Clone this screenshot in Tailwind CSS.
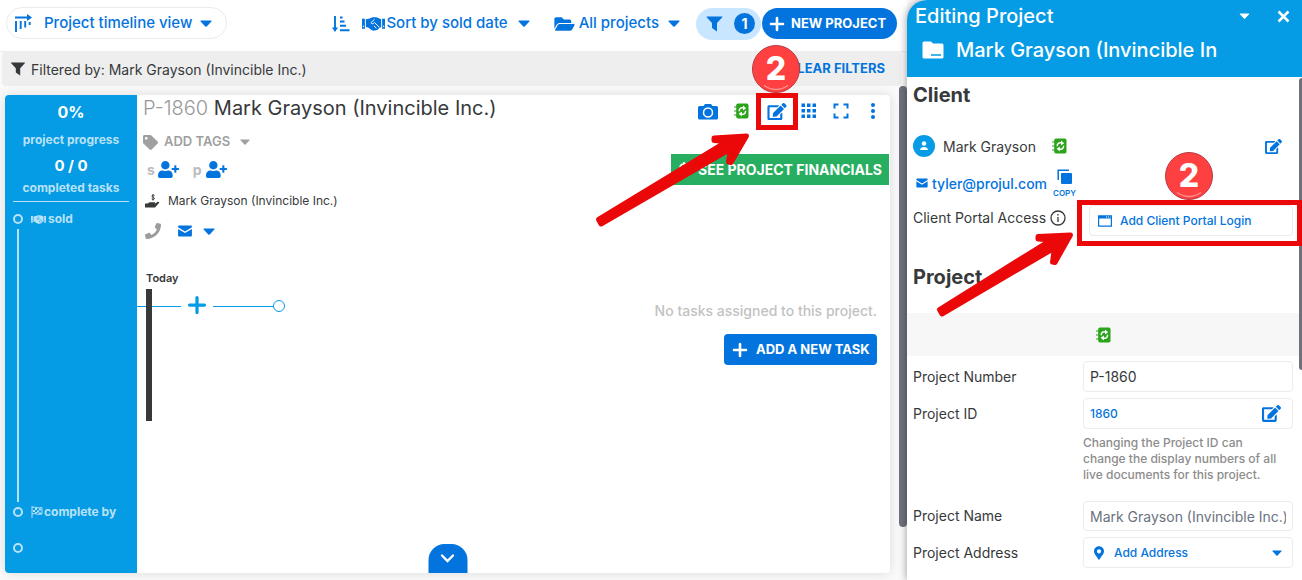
<!DOCTYPE html>
<html lang="en">
<head>
    <meta charset="UTF-8">
    <meta name="viewport" content="width=device-width, initial-scale=1.0">
    <script src="https://cdn.jsdelivr.net/npm/@tailwindcss/browser@4"></script>
    <title>Projects</title>
</head>
<body class="relative flex h-screen overflow-hidden bg-[#fafafa] font-['Inter','Liberation_Sans',sans-serif] text-[15px] text-[#37393b]">

    <!--Icons-->
    <svg class="hidden">
        <symbol id="caret" viewBox="0 0 12 7"><path d="M1 .5h10c.6 0 .8.7.4 1L6.7 6.4a1 1 0 0 1-1.400 0L.6 1.500C.2 1.200.4.5 1 .5z"/></symbol>
        <symbol id="plus" viewBox="0 0 16 16"><path d="M8 2v12M2 8h12" fill="none" stroke="currentColor" stroke-width="2.6" stroke-linecap="round"/></symbol>
        <symbol id="filter" viewBox="0 0 16 16"><path d="M.5.5h15c.4 0 .5.5.3.8L10.500 7v8.500L5.500 12V7L.2 1.300C0 1 .1.5.5.5z"/></symbol>
        <symbol id="edit" viewBox="0 0 576 512"><path d="M402.600 83.200l90.200 90.200c3.800 3.800 3.800 10 0 13.800L274.400 405.600l-92.800 10.300c-12.400 1.400-22.900-9.100-21.500-21.500l10.300-92.800L388.800 83.200c3.800-3.800 10-3.800 13.800 0zm162-22.900l-48.800-48.800c-15.200-15.200-39.900-15.200-55.200 0l-35.400 35.400c-3.800 3.800-3.800 10 0 13.800l90.200 90.200c3.800 3.800 10 3.800 13.800 0l35.400-35.400c15.200-15.300 15.200-40 0-55.200zM384 346.200V448H64V128h229.800c3.200 0 6.200-1.300 8.500-3.500l40-40c7.600-7.600 2.200-20.500-8.500-20.500H48C21.500 64 0 85.500 0 112v352c0 26.500 21.500 48 48 48h352c26.500 0 48-21.500 48-48V306.200c0-10.700-12.900-16-20.500-8.500l-40 40c-2.200 2.300-3.500 5.300-3.500 8.500z"/></symbol>
        <symbol id="user-plus" viewBox="0 0 640 512"><path d="M624 208h-64v-64c0-8.800-7.200-16-16-16h-32c-8.800 0-16 7.200-16 16v64h-64c-8.800 0-16 7.200-16 16v32c0 8.800 7.200 16 16 16h64v64c0 8.800 7.200 16 16 16h32c8.800 0 16-7.200 16-16v-64h64c8.800 0 16-7.200 16-16v-32c0-8.800-7.200-16-16-16zm-400 48c70.700 0 128-57.300 128-128S294.700 0 224 0 96 57.300 96 128s57.300 128 128 128zm89.600 32h-16.700c-22.200 10.200-46.900 16-72.900 16s-50.600-5.800-72.900-16h-16.700C60.200 288 0 348.200 0 422.400V464c0 26.500 21.500 48 48 48h352c26.500 0 48-21.500 48-48v-41.600c0-74.200-60.200-134.400-134.400-134.400z"/></symbol>
        <symbol id="handshake" viewBox="0 0 24 14"><path d="M0 1.500h3v10.500H0zM21 1.500h3v10.500h-3zM4 2l4-.8L11 0h4l5 2v8.500l-2 .5-1.500 2-2 .5L12 14l-2.500-1L6 10.500H4z"/><path d="M9.500 5.500c0 1.800 2.500 1.500 3.500 0l5 4.800M9.500 5.500L13 2.200M12.500 9l2.500 2.400" fill="none" stroke="var(--gap)" stroke-width="1"/><path d="M.8 9.500h1.200M22 9.500h1.200" stroke="var(--gap)" stroke-width="1.200"/></symbol>
        <symbol id="sync-book" viewBox="0 0 15 16"><rect x="2.200" y=".5" width="12.300" height="15" rx="1.800"/><path d="M0 4h3M0 8h3M0 12h3" stroke="currentColor" stroke-width="1.200"/><path d="M5.200 8.200C5 5.300 7.500 4.200 10 5M11.600 7.800c.2 2.900-2.300 4-4.800 3.200" fill="none" stroke="#fff" stroke-width="1.500"/><path d="M9 2.500L12.200 5.200 9 7.500zM7.800 8.500L4.600 10.800l3.200 2.700z" fill="#fff"/></symbol>
        <symbol id="mail" viewBox="0 0 16 13"><path d="M1.500.5h13a1 1 0 0 1 1 1v1L8 7 .5 2.500v-1a1 1 0 0 1 1-1zM.5 4.200L8 8.700l7.500-4.500v7.300a1 1 0 0 1-1 1h-13a1 1 0 0 1-1-1z"/></symbol>
    </svg>

    <!--Project list-->
    <main class="flex min-w-0 flex-1 flex-col">
        <header class="flex h-[52px] shrink-0 items-start border-b border-[#eeeeee] bg-white pl-[6px] pr-[10px] pt-[7px] font-medium text-[#0374dd]">
            <button class="flex h-8 w-[221px] items-center rounded-full border border-[#ebebeb] pl-2">
                <svg class="h-[18px] w-[18px]" viewBox="0 0 18 18"><path d="M0 3.500h15M1 7v11M5.700 7v8M10.200 7v6.500M14.700 8v3" fill="none" stroke="currentColor" stroke-width="1.900"/><path d="M12 0l5 3.500-5 3.500z" fill="currentColor"/></svg>
                <span class="ml-[11px]">Project timeline view</span>
                <svg class="ml-auto mr-[14px] h-[7px] w-3 fill-current"><use href="#caret"/></svg>
            </button>
            <div class="ml-auto flex h-[33px] items-center">
                <button aria-label="Sort order">
                    <svg class="h-4 w-[18px]" viewBox="0 0 18 16"><path d="M3 0v13M8 1.500h2.500M8 5.500h4.500M8 9.800h6M8 14.200h9.500" fill="none" stroke="currentColor" stroke-width="1.900"/><path d="M0 11.500h6L3 16z" fill="currentColor"/></svg>
                </button>
                <button class="ml-3 flex items-center">
                    <svg class="h-[14px] w-[23px] fill-current [--gap:#fff]"><use href="#handshake"/></svg>
                    <span class="ml-px">Sort by sold date</span>
                    <svg class="ml-[10px] h-[7px] w-3 fill-current"><use href="#caret"/></svg>
                </button>
                <button class="ml-6 flex items-center">
                    <svg class="h-[18px] w-[21px] fill-current" viewBox="0 0 576 512"><path d="M572.700 292.100L500.300 416.200A64 64 0 0 1 445 448H45c-18.500 0-30-20-20.700-36l72.400-124.200A64 64 0 0 1 152 256h400c18.500 0 30 20 20.700 36.100zM152 224h328v-48c0-26.500-21.500-48-48-48H272l-64-64H48C21.500 64 0 85.500 0 112v278l69-118.400C86.200 242.200 118 224 152 224z"/></svg>
                    <span class="ml-1">All projects</span>
                    <svg class="ml-[9px] h-[7px] w-3 fill-current"><use href="#caret"/></svg>
                </button>
                <button class="ml-4 flex h-8 w-[65px] items-center rounded-full bg-[#c8e6ff] pl-[10px]">
                    <svg class="h-4 w-[17px] fill-current"><use href="#filter"/></svg>
                    <span class="ml-[11px] flex h-[21px] w-[21px] items-center justify-center rounded-full bg-[#0374dd] text-[14px] font-bold text-white">1</span>
                </button>
                <button class="ml-px flex h-[31px] w-[135px] items-center rounded-full bg-[#0374dd] pl-[7px] text-white">
                    <svg class="h-4 w-4"><use href="#plus"/></svg>
                    <span class="ml-[6px] text-[13px] font-bold whitespace-nowrap">NEW PROJECT</span>
                </button>
            </div>
        </header>

        <!--Filter bar-->
        <div class="ml-[2px] mr-[6px] flex h-[34px] shrink-0 items-center rounded-[4px] bg-[#eeeeee] pl-[9px] pr-4">
            <svg class="h-[14px] w-[14px] fill-current"><use href="#filter"/></svg>
            <span class="ml-[6px] text-[14px]">Filtered by: Mark Grayson (Invincible Inc.)</span>
            <button class="ml-auto text-[13px] font-bold text-[#0374dd]">CLEAR FILTERS</button>
        </div>

        <div class="flex min-h-0 flex-1">
            <!--Project card-->
            <section class="relative mb-[7px] ml-[5px] mr-[9px] mt-[9px] flex min-w-0 flex-1 overflow-hidden rounded-[4px] bg-white shadow-[0_0_12px_rgba(0,0,0,0.13)]">
                <div class="flex w-[132px] shrink-0 flex-col bg-[#059be5] px-2 text-center font-bold text-[#b9e2f8]">
                    <p class="mt-[7px] text-[16px] leading-5 text-white">0%</p>
                    <p class="mt-2 text-[12px] leading-5">project progress</p>
                    <p class="mt-1 text-[15px] leading-6 text-white">0 / 0</p>
                    <p class="text-[12px] leading-5">completed tasks</p>
                    <div class="mt-[3px] border-t border-[#b9e2f8]"></div>
                    <div class="mt-[7px] flex h-5 items-center text-[12px]">
                        <span class="h-[10px] w-[10px] rounded-full border-2 border-[#b9e2f8]"></span>
                        <svg class="ml-2 h-[9px] w-[15px] fill-current [--gap:#059be5]"><use href="#handshake"/></svg>
                        <span class="ml-[2px]">sold</span>
                    </div>
                    <div class="ml-1 w-[2px] flex-1 bg-[#b9e2f8]"></div>
                    <div class="flex h-5 items-center text-[12px]">
                        <span class="h-[10px] w-[10px] rounded-full border-2 border-[#b9e2f8]"></span>
                        <svg class="ml-2 h-3 w-3" viewBox="0 0 12 12"><path d="M1 0v12M1 1.500c3-1.500 6 1.500 10 0v6.500c-4 1.500-7-1.500-10 0" fill="none" stroke="currentColor"/><path d="M2 4h2v2H2zM4 2h2v2H4zM6 4.500h2v2H6zM8 2.500h2v2H8zM4 6h2v1.500H4zM8 6.500h2V8H8z" fill="currentColor"/></svg>
                        <span class="ml-px whitespace-nowrap">complete by</span>
                    </div>
                    <span class="mb-5 mt-[21px] h-[10px] w-[10px] rounded-full border-2 border-[#b9e2f8]"></span>
                </div>

                <div class="flex min-w-0 flex-1 flex-col">
                    <div class="flex justify-between">
                        <div class="pl-[6px]">
                            <h1 class="text-[20px] leading-[26px]"><span class="font-light text-[#999999]">P-1860</span> Mark Grayson (Invincible Inc.)</h1>
                            <button class="mt-[11px] flex h-5 items-center text-[13px] font-semibold text-[#a0a0a0]">
                                <svg class="h-[15px] w-[15px] fill-current" viewBox="0 0 512 512"><path d="M0 252V48C0 21.500 21.500 0 48 0h204a48 48 0 0 1 34 14l212 212c18.700 18.700 18.700 49 0 67.900L293.800 498c-18.700 18.700-49 18.700-67.900 0L14 286A48 48 0 0 1 0 252zM112 64c-26.500 0-48 21.500-48 48s21.500 48 48 48 48-21.500 48-48-21.500-48-48-48z"/></svg>
                                <span class="ml-[6px]">ADD TAGS</span>
                                <svg class="ml-[10px] h-[6px] w-[10px] fill-current"><use href="#caret"/></svg>
                            </button>
                            <div class="ml-1 mt-[7px] flex h-5 items-center text-[14px] font-bold text-[#bdbdbd]">
                                s<button class="ml-[3px] text-[#0374dd]" aria-label="Add salesperson"><svg class="h-[17px] w-[21px] fill-current"><use href="#user-plus"/></svg></button>
                                <span class="ml-[14px]">p</span><button class="ml-1 text-[#0374dd]" aria-label="Add project manager"><svg class="h-[17px] w-[21px] fill-current"><use href="#user-plus"/></svg></button>
                            </div>
                            <div class="ml-[2px] mt-3 flex h-5 items-center text-[12px]">
                                <svg class="h-[14px] w-[15px]" viewBox="0 0 15 14"><path d="M0 9.500h2.500l2-1.200h5c1.200 0 1 1.500 0 1.500H7h3l2.700-2c1-.6 2 .5 1.300 1.300l-4 4.400H0z" fill="currentColor"/><path d="M9.400 1.500c-1.700-1-3.200.5-2 1.400 1 .6 2 .6 2 1.500 0 1.300-2 1.200-2.700.5M8 0v6.500" fill="none" stroke="currentColor"/></svg>
                                <span class="ml-2">Mark Grayson (Invincible Inc.)</span>
                            </div>
                            <div class="ml-[2px] mt-[10px] flex h-5 items-center">
                                <button class="text-[#9c9c9c]" aria-label="Call"><svg class="h-4 w-4 fill-current" viewBox="0 0 512 512"><path d="M493.400 24.600l-104-24c-11.300-2.600-22.900 3.300-27.500 13.900l-48 112c-4.200 9.800-1.400 21.300 6.900 28l60.600 49.600c-36 76.700-98.900 140.500-177.200 177.200l-49.600-60.600c-6.800-8.300-18.200-11.100-28-6.900l-112 48C3.900 366.500-2 378.100.6 389.400l24 104C27.100 504.200 36.700 512 48 512c256.100 0 464-207.500 464-464 0-11.200-7.700-20.900-18.600-23.400z"/></svg></button>
                                <button class="ml-4 flex items-center text-[#0374dd]" aria-label="Email"><svg class="h-3 w-4 fill-current"><use href="#mail"/></svg><svg class="ml-[10px] h-[7px] w-3 fill-current"><use href="#caret"/></svg></button>
                            </div>
                        </div>
                        <div class="flex flex-col items-end pr-px">
                            <div class="mt-1 flex h-6 items-center pr-[14px] text-[#0374dd]">
                                <button aria-label="Photos"><svg class="h-[17px] w-5" viewBox="0 0 20 16"><path d="M1.500 2.500h4L7 .5h6l1.500 2h4a1.500 1.500 0 0 1 1.500 1.500v10.500a1.500 1.500 0 0 1-1.500 1.500h-17A1.500 1.500 0 0 1 0 14.500V4a1.500 1.500 0 0 1 1.500-1.500z" fill="currentColor"/><circle cx="10" cy="9" r="4.500" fill="currentColor" stroke="#fff" stroke-width="1.500"/><circle cx="10" cy="9" r="2.200" fill="currentColor" stroke="none"/></svg></button>
                                <button class="ml-4 text-[#2ba31b]" aria-label="Sync"><svg class="h-4 w-[15px] fill-current"><use href="#sync-book"/></svg></button>
                                <button class="ml-[18px]" aria-label="Edit project"><svg class="h-[17px] w-5 fill-current"><use href="#edit"/></svg></button>
                                <button class="ml-[14px]" aria-label="Grid"><svg class="h-4 w-4 fill-current" viewBox="0 0 16 16"><path d="M.5.5h3.500v3.500H.5zM6 .5h3.500v3.500H6zM11.500.5H15v3.500h-3.500zM.5 6h3.500v3.500H.5zM6 6h3.500v3.500H6zM11.500 6H15v3.500h-3.500zM.5 11.500h3.500V15H.5zM6 11.500h3.500V15H6zM11.500 11.500H15V15h-3.500z"/></svg></button>
                                <button class="ml-4" aria-label="Full screen"><svg class="h-4 w-4" viewBox="0 0 16 16"><path d="M1.500 5.500v-4h4M10.500 1.500h4v4M14.500 10.500v4h-4M5.500 14.500h-4v-4" fill="none" stroke="currentColor" stroke-width="2"/></svg></button>
                                <button class="ml-[22px]" aria-label="More"><svg class="h-4 w-1 fill-current" viewBox="0 0 4 16"><circle cx="2" cy="2" r="2"/><circle cx="2" cy="8" r="2"/><circle cx="2" cy="14" r="2"/></svg></button>
                            </div>
                            <button class="mt-[31px] flex h-[31px] w-[218px] items-center justify-end bg-[#27ae60] pr-[7px] text-[14px] font-bold whitespace-nowrap text-white">
                                <svg class="mr-2 h-4 w-3" viewBox="0 0 12 16"><path d="M10 4C7-.5 0 3 3 6.500c1.500 1.500 5.500 1 6.500 3.500.8 3.500-5 4.500-8 1.500M6 0v16" fill="none" stroke="currentColor" stroke-width="1.800"/></svg>
                                SEE PROJECT FINANCIALS
                            </button>
                        </div>
                    </div>

                    <!--Timeline-->
                    <div class="mt-[29px] flex justify-between">
                        <div>
                            <p class="pl-[9px] text-[11px] leading-4 font-semibold">Today</p>
                            <div class="mt-[3px] flex items-start text-[#059be5]">
                                <div class="mt-[17px] w-[9px] border-t border-current"></div>
                                <div class="h-[132px] w-[6px] bg-[#37393b]"></div>
                                <div class="mt-[17px] w-[29px] border-t border-current"></div>
                                <button class="mx-[6px] mt-[6px]" aria-label="Add task"><svg class="h-5 w-5"><use href="#plus"/></svg></button>
                                <div class="mt-[17px] w-[60px] border-t border-current"></div>
                                <div class="mt-[11px] h-3 w-3 rounded-full border border-current"></div>
                            </div>
                        </div>
                        <div class="flex flex-col items-end pr-[13px] pt-[31px]">
                            <p class="text-[14px] leading-5 font-medium text-[#c2c2c2]">No tasks assigned to this project.</p>
                            <button class="mt-[13px] flex h-[31px] w-[153px] items-center rounded-[4px] bg-[#0374dd] pl-2 text-[13px] font-bold whitespace-nowrap text-white">
                                <svg class="h-4 w-4"><use href="#plus"/></svg>
                                <span class="ml-2">ADD A NEW TASK</span>
                            </button>
                        </div>
                    </div>
                </div>
                <button class="absolute bottom-0 left-1/2 flex h-[29px] w-[39px] -translate-x-1/2 items-center justify-center rounded-t-[16px] bg-[#0374dd] text-white" aria-label="Expand">
                    <svg class="h-[9px] w-[14px]" viewBox="0 0 14 9"><path d="M1.500 1.500L7 7l5.500-5.500" fill="none" stroke="currentColor" stroke-width="2.400" stroke-linecap="round"/></svg>
                </button>
            </section>
            <div class="mb-[53px] w-2 shrink-0 rounded-[4px] bg-[#6f727d]"></div>
        </div>
    </main>

    <!--Edit panel-->
    <aside class="flex w-[395px] shrink-0 flex-col overflow-hidden rounded-tl-[20px] bg-white shadow-[0_0_8px_rgba(0,0,0,0.4)]">
        <header class="h-[77px] shrink-0 bg-[#059be5] pl-2 pr-3 text-[20px] font-medium text-white">
            <div class="flex h-8 items-center">
                <h2>Editing Project</h2>
                <button class="ml-auto" aria-label="Options"><svg class="h-[6px] w-[11px] fill-current"><use href="#caret"/></svg></button>
                <button class="ml-[27px]" aria-label="Close"><svg class="h-[13px] w-[13px]" viewBox="0 0 13 13"><path d="M1.500 1.500l10 10M11.500 1.500l-10 10" stroke="currentColor" stroke-width="2.600"/></svg></button>
            </div>
            <div class="flex h-9 items-center pl-[7px]">
                <svg class="h-[18px] w-[22px]" viewBox="0 0 22 18"><path d="M2 .5h7l2 2h9a1.500 1.500 0 0 1 1.500 1.500v12a1.500 1.500 0 0 1-1.500 1.500H2A1.500 1.500 0 0 1 .5 16V2A1.500 1.500 0 0 1 2 .5z" fill="currentColor"/><path d="M9 14h10" stroke="#059be5" stroke-width="1.600"/></svg>
                <span class="ml-3">Mark Grayson (Invincible In</span>
            </div>
        </header>
        <div class="flex min-h-0 flex-1">
            <div class="min-w-0 flex-1">
                <div class="pl-[6px] pr-[6px]">
                    <h3 class="pt-1 text-[20px] leading-7 font-bold">Client</h3>
                    <div class="mt-[21px] flex h-8 items-center">
                        <svg class="h-[22px] w-[22px]" viewBox="0 0 22 22"><circle cx="11" cy="11" r="11" fill="#059be5"/><circle cx="11" cy="8.500" r="2.200" fill="#fff"/><path d="M7 15c0-4 8-4 8 0z" fill="#fff"/></svg>
                        <span class="ml-2 text-[14px]">Mark Grayson</span>
                        <svg class="ml-4 h-4 w-[15px] fill-current text-[#2ba31b]"><use href="#sync-book"/></svg>
                        <button class="ml-auto mr-[11px] text-[#0374dd]" aria-label="Edit client"><svg class="h-[15px] w-[17px] fill-current"><use href="#edit"/></svg></button>
                    </div>
                    <div class="mt-[3px] flex h-9 items-center pl-[3px] text-[#0374dd]">
                        <svg class="h-[10px] w-3 fill-current"><use href="#mail"/></svg>
                        <a class="ml-1 text-[14px] font-medium" href="mailto:tyler@projul.com">tyler@projul.com</a>
                        <button class="ml-[6px] flex flex-col items-center text-[8px] leading-[10px] font-semibold">
                            <svg class="h-[15px] w-[15px]" viewBox="0 0 15 15"><rect x="4" y="4" width="11" height="11" rx="1" fill="currentColor"/><path d="M1.200 11V1.200H12" fill="none" stroke="currentColor" stroke-width="1.500"/></svg>
                            <span class="mt-1">COPY</span>
                        </button>
                    </div>
                    <div class="mt-1 flex items-center">
                        <span class="flex h-[31px] items-center pb-[6px] text-[14px]">Client Portal Access
                            <svg class="ml-1 h-4 w-4" viewBox="0 0 16 16"><circle cx="8" cy="8" r="7" fill="none" stroke="currentColor" stroke-width="1.300"/><path d="M8 7v5M8 4v1.500" stroke="currentColor" stroke-width="1.300"/></svg>
                        </span>
                        <button class="ml-auto flex h-[31px] w-[204px] items-center rounded-[4px] border border-[#ebebeb] pl-2 text-[12px] font-medium text-[#0374dd]">
                            <svg class="h-3 w-[14px]" viewBox="0 0 14 12"><path d="M.6.8h12.800v10.400H.6zM.6 3h12.800" fill="none" stroke="currentColor" stroke-width="1.200"/><path d="M1 1h12v2H1z" fill="currentColor"/><path d="M8 2h1M10 2h1M12 2h.6" stroke="#fff"/></svg>
                            <span class="ml-2">Add Client Portal Login</span>
                        </button>
                    </div>
                    <h3 class="mt-[27px] text-[20px] leading-7 font-bold">Project</h3>
                </div>
                <div class="mt-[22px] flex h-[43px] items-center justify-center bg-[#f7f7f7] text-[#2ba31b]">
                    <svg class="h-4 w-[15px] fill-current"><use href="#sync-book"/></svg>
                </div>
                <form class="grid grid-cols-[1fr_210px] gap-y-[6px] pl-[6px] pr-[6px] pt-[5px] text-[14px]">
                    <label for="number" class="leading-[31px]">Project Number</label>
                    <input id="number" type="text" value="P-1860" class="h-[31px] min-w-0 rounded-[4px] border border-[#ebebeb] px-[6px]">
                    <label for="project-id" class="leading-[31px]">Project ID</label>
                    <div>
                        <div class="flex h-[31px] items-center rounded-[4px] border border-[#ebebeb] pl-[6px] pr-[11px] text-[#0374dd]">
                            <input id="project-id" type="text" value="1860" class="min-w-0 flex-1 text-[12px] font-medium">
                            <button type="button" aria-label="Edit project ID"><svg class="h-[17px] w-[19px] fill-current"><use href="#edit"/></svg></button>
                        </div>
                        <p class="mb-3 mt-[6px] text-[12px] leading-4 font-medium text-[#8c8c8c]">Changing the Project ID can<br>change the display numbers of all<br>live documents for this project.</p>
                    </div>
                    <label for="name" class="leading-[30px]">Project Name</label>
                    <input id="name" type="text" placeholder="Mark Grayson (Invincible Inc.)" class="h-[30px] min-w-0 rounded-[4px] border border-[#ebebeb] px-[6px] placeholder:text-[#6b7280]">
                    <span id="address" class="leading-[31px]">Project Address</span>
                    <button type="button" aria-describedby="address" class="flex h-[31px] items-center rounded-[4px] border border-[#ebebeb] pl-[10px] pr-[10px] text-[12px] font-medium text-[#0374dd]">
                        <svg class="h-[14px] w-[10px] fill-current" viewBox="0 0 384 512"><path d="M172.300 501.700C27 291 0 269.400 0 192 0 86 86 0 192 0s192 86 192 192c0 77.400-27 99-172.300 309.700-9.500 13.800-29.900 13.800-39.400 0zM192 272c44.200 0 80-35.800 80-80s-35.800-80-80-80-80 35.800-80 80 35.800 80 80 80z"/></svg>
                        <span class="ml-[10px]">Add Address</span>
                        <svg class="ml-auto h-[6px] w-[10px] fill-current"><use href="#caret"/></svg>
                    </button>
                </form>
            </div>
            <div class="mt-px h-[292px] w-[3px] shrink-0 rounded-l-sm bg-[#6f727d]"></div>
        </div>
    </aside>

    <!--Callouts-->
    <div class="pointer-events-none absolute right-[504px] top-[93px] h-[37px] w-[42px] border-[5px] border-[#eb0808]"></div>
    <div class="pointer-events-none absolute right-0 top-[200px] h-[46px] w-[225px] border-[5px] border-[#eb0808]"></div>
    <svg class="pointer-events-none absolute right-[547px] top-[130px] h-[100px] w-[165px] fill-[#eb0808] stroke-[#eb0808]" viewBox="590 130 165 100"><path d="M598.500 219.500L727 141.500L714 140.500V138L746.500 136L731 162.500L728.500 162L730.500 149L601 224Z" stroke-width="5" stroke-linejoin="round"/></svg>
    <svg class="pointer-events-none absolute right-[223px] top-[230px] h-[90px] w-[150px] fill-[#eb0808] stroke-[#eb0808]" viewBox="929 230 150 90"><path d="M939.500 309.500L1051 240L1038 239V236.500L1070.500 235L1055 262.500L1052.500 262L1054.500 248L942 314Z" stroke-width="5" stroke-linejoin="round"/></svg>
    <div class="pointer-events-none absolute right-[502px] top-[45px] flex h-12 w-12 items-center justify-center rounded-full border border-[#b93a44] bg-[#ff4040] text-[32px] font-extrabold text-white">
        2
        <svg class="absolute bottom-0 h-2 w-7" viewBox="0 0 28 8"><path d="M2 1.500q12 8 24 0" fill="none" stroke="#ff8f8f" stroke-width="1.500"/></svg>
    </div>
    <div class="pointer-events-none absolute right-[89px] top-[152px] flex h-12 w-12 items-center justify-center rounded-full border border-[#b93a44] bg-[#ff4040] text-[32px] font-extrabold text-white">
        2
        <svg class="absolute bottom-0 h-2 w-7" viewBox="0 0 28 8"><path d="M2 1.500q12 8 24 0" fill="none" stroke="#ff8f8f" stroke-width="1.500"/></svg>
    </div>
</body>
</html>
